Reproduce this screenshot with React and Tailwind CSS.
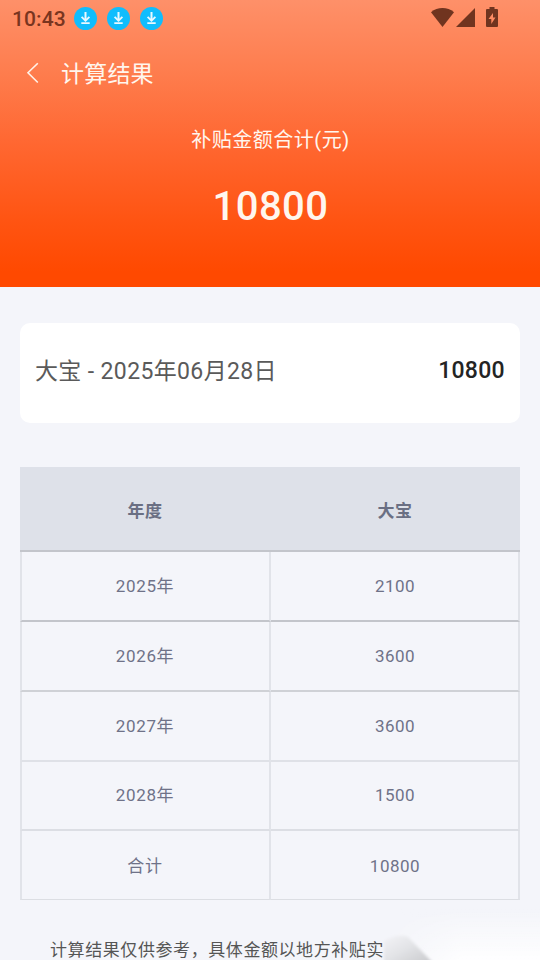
import React from "react";

const rows = [
  { label: "2025年", value: "2100", cell: "h-[70px] border-b-[#c3c5cb] border-b-2 pt-[2px]" },
  { label: "2026年", value: "3600", cell: "h-[70px] border-b-[#cfd1d6] border-b-2 pt-[2px]" },
  { label: "2027年", value: "3600", cell: "h-[70px] border-b-[#dfe1e7] border-b-2 pt-[2px]" },
  { label: "2028年", value: "1500", cell: "h-[69px] border-b-[#dcdee4] border-b-2 pt-px" },
  { label: "合计", value: "10800", cell: "h-[69px] border-b-[#dcdee3] border-b pt-[3px]" },
];

function DownloadBadge() {
  return (
    <svg className="size-[23px]" viewBox="0 0 23 23" fill="none">
      <circle cx="11.5" cy="11.5" r="11.5" fill="#10bdfd" />
      <path d="M11.5 5v8" stroke="#e9f8ff" strokeWidth="2" />
      <path d="M7.6 9.8l3.9 3.9 3.9-3.9M7.3 16.2h8.4" stroke="#e9f8ff" strokeWidth="1.8" />
    </svg>
  );
}

function StatusBar() {
  return (
    <div className="flex h-[37px] items-center pl-3 pr-[41px] text-[#79351f]">
      <span className="w-[62px] pt-[2px] text-[21px] font-medium leading-[35px] tracking-[0.1px]">10:43</span>
      <div className="flex gap-[10px]">
        <DownloadBadge />
        <DownloadBadge />
        <DownloadBadge />
      </div>
      <svg className="mb-[3px] ml-auto h-[22px] w-[68px]" viewBox="431 6 68 22" fill="#70341f">
        <path d="M431 12.2C437.5 6.6 447.5 6.6 454 12.2L442.5 27Z" />
        <path d="M475 8v19h-19Z" />
        <path
          fillRule="evenodd"
          d="M489.5 7h5v2h2.5q1 0 1 1v16q0 1-1 1h-10q-1 0-1-1V10q0-1 1-1h2.5ZM493 13l-4.5 6h2.8v5l4.2-6.5H493Z"
        />
      </svg>
    </div>
  );
}

export default function App() {
  return (
    <div className="h-[960px] w-[540px] overflow-hidden bg-[#f4f5fa] font-[Roboto,'Noto_Sans_CJK_SC',sans-serif]">
      <header className="h-[287px] bg-[linear-gradient(to_bottom,#fe9069_0%,#fe7d4e_25%,#ff6731_50%,#ff5412_77%,#ff4900_95%)] text-[#fff6ee]">
        <StatusBar />
        <div className="flex h-[73px] items-center pl-[26px]">
          <svg className="mb-px h-[22px] w-[13px]" viewBox="0 0 13 22" fill="none">
            <path d="M11.8 1.2L2 10.8L11.8 20.5" stroke="#fff2e8" strokeWidth="1.6" />
          </svg>
          <h1 className="pl-[22px] pt-[3px] text-[23px] leading-8 tracking-[0.2px]">计算结果</h1>
        </div>
        <div className="flex flex-col items-center pt-[15px]">
          <p className="pl-px text-[20px] leading-[30px] tracking-[0.5px]">补贴金额合计(元)</p>
          <p className="mt-[29px] pl-px text-[40px] font-medium leading-[46px] tracking-[0.5px]">10800</p>
        </div>
      </header>

      <main className="px-5">
        <section className="mt-9 flex h-[100px] items-center justify-between rounded-[10px] bg-white px-[15px] pb-[3px]">
          <span className="text-[23px] leading-8 tracking-[0.36px] text-[#5a5a5a]">大宝 - 2025年06月28日</span>
          <span className="pb-px text-[23px] font-medium leading-8 tracking-[0.3px] text-[#242424]">10800</span>
        </section>

        <section className="mt-11 text-center text-[17px] tracking-[0.5px] text-[#6f7288]">
          <div className="grid h-[85px] grid-cols-2 items-center border-b-2 border-[#c3c5cb] bg-[#dee1e9] pt-[7px] font-bold text-[#6a6f83]">
            <div>年度</div>
            <div>大宝</div>
          </div>
          {rows.map((row) => (
            <div key={row.label} className="grid grid-cols-[251px_249px]">
              <div
                className={`flex items-center justify-center border-x-2 border-x-[#e1e3e9] pr-px tracking-[0.65px] ${row.cell}`}
              >
                {row.label}
              </div>
              <div className={`flex items-center justify-center border-r-2 border-r-[#e1e3e9] pl-px ${row.cell}`}>
                {row.value}
              </div>
            </div>
          ))}
        </section>

        <div className="relative -mx-5 h-[60px] overflow-hidden">
          <p className="whitespace-nowrap pl-[50px] pt-9 text-[17px] leading-7 tracking-[0.58px] text-[#555]">
            计算结果仅供参考，具体金额以地方补贴实
          </p>
          <svg className="absolute bottom-0 right-0 h-[60px] w-[170px]" viewBox="370 900 170 60">
            <defs>
              <linearGradient id="glow" x1="0" y1="0" x2="0" y2="1">
                <stop offset="0" stopColor="#fff" stopOpacity="0" />
                <stop offset="1" stopColor="#fff" stopOpacity="0.9" />
              </linearGradient>
              <linearGradient id="fade" x1="0" y1="0" x2="1" y2="0">
                <stop offset="0" stopColor="#fff" stopOpacity="0" />
                <stop offset="0.5" stopColor="#fff" />
              </linearGradient>
              <mask id="edge">
                <path d="M384 900H540V960H384Z" fill="url(#fade)" />
              </mask>
              <linearGradient id="shade" x1="0" y1="0" x2="1" y2="1">
                <stop offset="0" stopColor="#f3f3f7" />
                <stop offset="0.45" stopColor="#e2e3e6" />
                <stop offset="1" stopColor="#c6c7ca" />
              </linearGradient>
              <filter id="soft">
                <feGaussianBlur stdDeviation="1.8" />
              </filter>
            </defs>
            <path d="M384 908H540V960H384Z" fill="url(#glow)" mask="url(#edge)" />
            <path d="M384 941Q397 933 408 937L434 964H384Z" fill="url(#shade)" filter="url(#soft)" />
          </svg>
        </div>
      </main>
    </div>
  );
}
